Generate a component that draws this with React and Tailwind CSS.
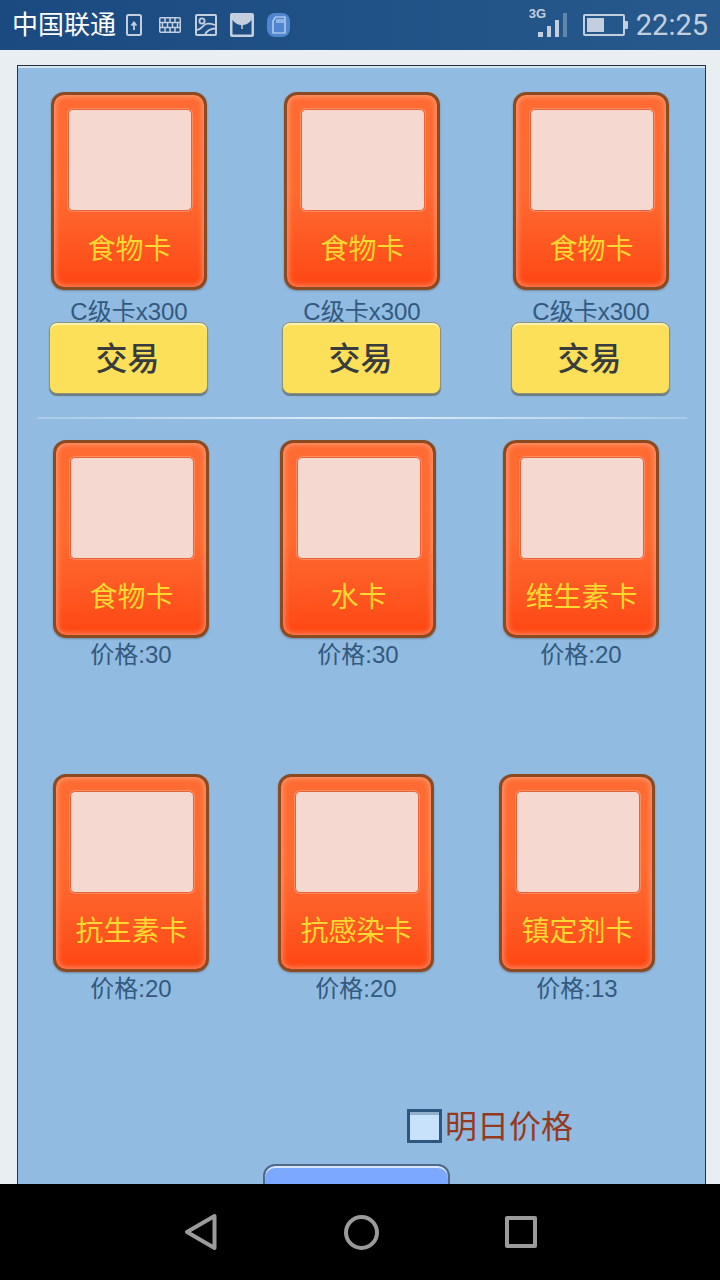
import React from "react";

const FONT = "font-['Liberation_Sans','Noto_Sans_CJK_SC',sans-serif]";

const topCards = ["食物卡", "食物卡", "食物卡"];
const middleCards = [
  { name: "食物卡", price: 30 },
  { name: "水卡", price: 30 },
  { name: "维生素卡", price: 20 },
];
const bottomCards = [
  { name: "抗生素卡", price: 20 },
  { name: "抗感染卡", price: 20 },
  { name: "镇定剂卡", price: 13 },
];

const StatusIcons = () => (
  <div className="ml-[10px] flex items-center text-[#c3cfdf]">
    {/* upload */}
    <svg width="16" height="22" viewBox="0 0 16 22" fill="none">
      <rect x="1" y="1" width="14" height="20" rx="1.500" stroke="currentColor" strokeWidth="2" />
      <path d="M8 16V9M5.500 11.500 8 8.500l2.500 3" stroke="currentColor" strokeWidth="1.800" />
    </svg>
    {/* keyboard */}
    <svg width="22" height="16" viewBox="0 0 22 16" fill="none" className="ml-[17px]">
      <rect x="0.750" y="0.750" width="20.500" height="14.500" rx="1" stroke="currentColor" strokeWidth="1.500" />
      <path d="M1 5.500h20M1 10.500h20M6 1v4.500M11 1v4.500M16 1v4.500M3.500 5.500v5M8.500 5.500v5M13.500 5.500v5M18.500 5.500v5M6 10.500v5M11 10.500v5M16 10.500v5" stroke="currentColor" strokeWidth="1.500" />
    </svg>
    {/* picture */}
    <svg width="22" height="22" viewBox="0 0 22 22" fill="none" className="ml-[14px]">
      <rect x="1" y="1" width="20" height="20" rx="1" stroke="currentColor" strokeWidth="2" />
      <circle cx="7" cy="7" r="2.600" stroke="currentColor" strokeWidth="1.800" />
      <path d="M2 16c4 0 6-5 9-6 3-1 6 0 9 1M10 21c1-3 4-6 10-6.500" stroke="currentColor" strokeWidth="1.800" />
    </svg>
    {/* pocket */}
    <svg width="24" height="24" viewBox="0 0 24 24" className="ml-[13px]">
      <rect x="0" y="0" width="24" height="24" rx="2" fill="currentColor" />
      <path d="M2.500 7c3 4 6 5 9.500 5s6.500-1 9.500-5v14.500h-19z" fill="#1d4d83" />
      <path d="M12 10v6" stroke="currentColor" strokeWidth="1.500" />
      <circle cx="12" cy="11" r="1.500" fill="currentColor" />
    </svg>
    {/* sd card */}
    <div className="ml-[13px] flex h-[24px] w-[23px] items-center justify-center rounded-[8px] bg-[#4f86cf]">
      <svg width="14" height="18" viewBox="0 0 14 18" fill="none">
        <path d="M3.500 1h9.500v16H1V5z" stroke="#cfe0f5" strokeWidth="1.200" />
        <path d="M5 3v4M7 3v4M9 3v4M11 3v4" stroke="#cfe0f5" strokeWidth="1" />
      </svg>
    </div>
  </div>
);

const StatusBar = () => (
  <div className={`flex h-[50px] shrink-0 items-center bg-gradient-to-r from-[#1a4a80] to-[#27598c] px-[12px] ${FONT}`}>
    <span className="text-[26px] leading-none text-white">中国联通</span>
    <StatusIcons />
    <div className="ml-auto flex items-center">
      <div className="relative mr-[16px] flex h-[24px] items-end gap-[4px]">
        <span className="absolute -left-[9px] -top-[6px] text-[13px] font-bold leading-[14px] text-[#c3cfdf]">3G</span>
        <div className="h-[5px] w-[5px] bg-[#c3cfdf]" />
        <div className="h-[11px] w-[4px] bg-[#c3cfdf]" />
        <div className="h-[17px] w-[4px] bg-[#c3cfdf]" />
        <div className="h-[24px] w-[4px] bg-[#5f86ae]" />
      </div>
      <div className="relative mr-[11px] h-[22px] w-[42px] rounded-[2px] border-2 border-[#c3cfdf] p-[2px]">
        <div className="h-full w-[17px] bg-[#c3cfdf]" />
        <div className="absolute -right-[5px] top-[5px] h-[8px] w-[3px] rounded-r-[1px] bg-[#c3cfdf]" />
      </div>
      <span className="font-['Roboto',sans-serif] text-[29px] font-normal leading-none text-[#c3cfdf]">22:25</span>
    </div>
  </div>
);

const Card = ({ name, className }) => (
  <div className={`h-[198px] w-[156px] rounded-[13px] border-[3px] border-[#8a4a22] bg-gradient-to-b from-[#ff6b32] via-[#ff6a30] to-[#ff4612] pl-[14px] pr-[12px] pt-[14px] shadow-[inset_0_0_5px_2px_rgba(255,190,160,0.5),0_1px_2px_rgba(60,50,50,0.35)] ${className}`}>
    <div className="h-[102px] rounded-[5px] border border-[#e8623a] bg-[#f5d8cf] shadow-[0_0_0_1px_rgba(255,170,130,0.55)]" />
    <div className="-ml-[1px] mt-[19px] whitespace-nowrap text-center text-[28px] leading-[40px] text-[#ffd832]">{name}</div>
  </div>
);

const TradeColumn = ({ name }) => (
  <div className="flex w-[160px] flex-col">
    <Card name={name} className="ml-[2px]" />
    <div className="mt-[6px] h-[26px] text-center text-[24px] leading-[32px] text-[#33597f]">C级卡x300</div>
    <button className="h-[72px] w-[159px] rounded-[8px] border border-[#8f9080] bg-[#fce05a] pr-[2px] pt-[1px] text-[32px] font-medium text-[#383c3c] shadow-[inset_0_2px_0_#fdf3b4,0_2px_1px_rgba(80,80,60,0.6)]">
      交易
    </button>
  </div>
);

const PriceColumn = ({ name, price }) => (
  <div className="flex w-[156px] flex-col">
    <Card name={name} />
    <div className="text-center text-[24px] leading-[34px] text-[#33597f]">价格:{price}</div>
  </div>
);

const NavBar = () => (
  <div className="flex h-[96px] shrink-0 items-center bg-black pl-[184px]">
    <svg width="34" height="38" viewBox="0 0 34 38" fill="none">
      <path d="M30.500 3 3 19l27.500 16z" stroke="#9b9b9b" strokeWidth="4" strokeLinejoin="round" />
    </svg>
    <div className="ml-[126px] h-[35px] w-[35px] rounded-full border-[4px] border-[#9b9b9b]" />
    <div className="ml-[126px] h-[32px] w-[32px] rounded-[2px] border-[4px] border-[#9b9b9b]" />
  </div>
);

const App = () => {
  return (
    <div className={`flex h-[1280px] w-[720px] flex-col overflow-hidden bg-[#e9eef2] ${FONT}`}>
      <StatusBar />
      <main className="min-h-0 flex-1 overflow-hidden pl-[17px] pr-[14px] pt-[15px]">
        <div className="h-[1200px] border border-b-0 border-[#26333f] bg-[#91bbe0] pl-[30px] pr-[16px] pt-[26px] shadow-[inset_0_2px_0_#d5e3ef]">
          <div className="ml-[1px] grid grid-cols-[233px_229px_160px]">
            {topCards.map((name, i) => (
              <TradeColumn key={i} name={name} />
            ))}
          </div>

          <div className="-ml-[11px] mt-[23px] h-[2px] w-[650px] bg-gradient-to-r from-[#a9cbe6] via-[#e2eef7] to-[#a9cbe6]" />

          <div className="ml-[5px] mt-[21px] grid h-[334px] grid-cols-[227px_223px_156px]">
            {middleCards.map((card) => (
              <PriceColumn key={card.name} {...card} />
            ))}
          </div>

          <div className="ml-[5px] grid h-[335px] grid-cols-[225px_221px_156px]">
            {bottomCards.map((card) => (
              <PriceColumn key={card.name} {...card} />
            ))}
          </div>

          <div className="ml-[359px] flex h-[34px] items-center">
            <div className="h-[34px] w-[35px] border-[3px] border-[#2d577f] bg-[#c8e2fc] shadow-[inset_0_3px_0_#8fb0cf]" />
            <span className="ml-[3px] mt-[2px] text-[32px] leading-none text-[#953a20]">明日价格</span>
          </div>

          <div className="ml-[215px] mt-[21px] h-[60px] w-[187px] rounded-[12px] border-2 border-[#4d6a87] bg-[#7ca9ff] shadow-[inset_0_2px_0_#d8e6fb]" />
        </div>
      </main>
      <NavBar />
    </div>
  );
};

export default App;
